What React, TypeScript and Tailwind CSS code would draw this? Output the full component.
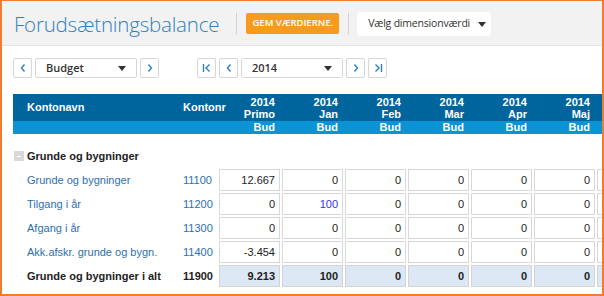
import type { ReactNode } from "react";

const months = [
  { year: "2014", label: "Primo" },
  { year: "2014", label: "Jan" },
  { year: "2014", label: "Feb" },
  { year: "2014", label: "Mar" },
  { year: "2014", label: "Apr" },
  { year: "2014", label: "Maj" },
];

const rows: Array<{ name: string; nr: string; values: string[] }> = [
  { name: "Grunde og bygninger", nr: "11100", values: ["12.667", "0", "0", "0", "0", "0"] },
  { name: "Tilgang i år", nr: "11200", values: ["0", "100", "0", "0", "0", "0"] },
  { name: "Afgang i år", nr: "11300", values: ["0", "0", "0", "0", "0", "0"] },
  { name: "Akk.afskr. grunde og bygn.", nr: "11400", values: ["-3.454", "0", "0", "0", "0", "0"] },
];

const total = { name: "Grunde og bygninger i alt", nr: "11900", values: ["9.213", "100", "0", "0", "0", "0"] };

function Chevron({ dir }: { dir: "left" | "right" }) {
  return (
    <svg width="8" height="10" viewBox="0 0 8 10" aria-hidden="true">
      <path
        d={dir === "left" ? "M5.5 1.5 L2.5 5 L5.5 8.5" : "M2.5 1.5 L5.5 5 L2.5 8.5"}
        fill="none"
        stroke="#2f7fc1"
        strokeWidth="1.4"
      />
    </svg>
  );
}

function EdgeIcon({ dir }: { dir: "first" | "last" }) {
  return (
    <svg width="12" height="10" viewBox="0 0 12 10" aria-hidden="true">
      {dir === "first" ? (
        <>
          <path d="M2.5 1 V9" stroke="#2f7fc1" strokeWidth="1.4" />
          <path d="M8.5 1.5 L5 5 L8.5 8.5" fill="none" stroke="#2f7fc1" strokeWidth="1.4" />
        </>
      ) : (
        <>
          <path d="M3.5 1.5 L7 5 L3.5 8.5" fill="none" stroke="#2f7fc1" strokeWidth="1.4" />
          <path d="M9.5 1 V9" stroke="#2f7fc1" strokeWidth="1.4" />
        </>
      )}
    </svg>
  );
}

function Caret() {
  return (
    <svg width="8" height="5" viewBox="0 0 8 5" aria-hidden="true" className="shrink-0">
      <path d="M0 0 H8 L4 5 Z" fill="#333" />
    </svg>
  );
}

function NavButton({ children }: { children: ReactNode }) {
  return (
    <button
      type="button"
      className="flex h-[20px] w-[19px] items-center justify-center rounded-[2px] border border-[#d6d6d6] bg-white"
    >
      {children}
    </button>
  );
}

function Select({ value }: { value: string }) {
  return (
    <div className="flex h-[20px] w-[102px] items-center justify-between rounded-[2px] border border-[#d6d6d6] bg-white pl-[10px] pr-[10px] text-[11px] font-semibold text-[#333]">
      <span>{value}</span>
      <Caret />
    </div>
  );
}

function Cell({ children, className }: { children?: ReactNode; className: string }) {
  return (
    <div className="w-[63px] shrink-0 pl-[2px]">
      <div className={`flex h-[22px] w-[61px] items-center justify-end border pr-[4px] ${className}`}>
        {children}
      </div>
    </div>
  );
}

function Toggle() {
  return (
    <div className="ml-[1px] mr-[3px] flex h-[10px] w-[10px] items-center justify-center bg-[#d9d9d9]">
      <div className="h-px w-[4px] bg-white" />
    </div>
  );
}

export default function App() {
  return (
    <div className="h-[296px] w-[604px] overflow-hidden border-b-2 border-l-2 border-r-2 border-t border-[#ed7d31] bg-white font-['Open_Sans',sans-serif]">
      <header className="flex h-[45px] items-start border-b border-[#e4e4e4] bg-[#f2f2f2] pl-[12px] pt-[11px]">
        <h1 className="mr-[17px] text-[20.5px] font-light leading-[24px] tracking-[-0.2px] text-[#2f7fc1]">
          Forudsætningsbalance
        </h1>
        <div className="mt-[1px] mr-[9px] h-[21px] w-px bg-[#d0d0d0]" />
        <button
          type="button"
          className="mt-[1px] h-[21px] w-[93px] rounded-[2px] bg-[#f89b1c] text-[9.5px] font-semibold text-white"
        >
          GEM VÆRDIERNE.
        </button>
        <div className="mt-[1px] ml-[9px] mr-[8px] h-[21px] w-px bg-[#d0d0d0]" />
        <button
          type="button"
          className="flex h-[24px] w-[134px] items-center gap-[8px] whitespace-nowrap rounded-[3px] bg-white pl-[11px] text-[10.5px] tracking-[-0.2px] text-[#333]"
        >
          Vælg dimensionværdi
          <Caret />
        </button>
      </header>

      <div className="flex items-center pl-[11px] pt-[12px]">
        <div className="flex items-center gap-[3px]">
          <NavButton>
            <Chevron dir="left" />
          </NavButton>
          <Select value="Budget" />
          <NavButton>
            <Chevron dir="right" />
          </NavButton>
        </div>
        <div className="ml-[38px] flex items-center gap-[3px]">
          <NavButton>
            <EdgeIcon dir="first" />
          </NavButton>
          <NavButton>
            <Chevron dir="left" />
          </NavButton>
          <Select value="2014" />
          <NavButton>
            <Chevron dir="right" />
          </NavButton>
          <NavButton>
            <EdgeIcon dir="last" />
          </NavButton>
        </div>
      </div>

      <div className="ml-[11px] mt-[16px] w-[700px] font-['Liberation_Sans',Arial,sans-serif] text-[11px]">
        <div className="flex h-[27px] items-center bg-[#00659d] font-bold text-white">
          <div className="w-[165px] shrink-0 pl-[14px]">Kontonavn</div>
          <div className="w-[39px] shrink-0 pl-[5px]">Kontonr</div>
          {months.map((m) => (
            <div key={m.label} className="w-[63px] shrink-0 pr-[5px] text-right leading-[12px]">
              <div>{m.year}</div>
              <div>{m.label}</div>
            </div>
          ))}
        </div>
        <div className="flex h-[13px] items-center bg-[#0a93d5] font-bold leading-[13px] text-white">
          <div className="w-[204px] shrink-0" />
          {months.map((m) => (
            <div key={m.label} className="w-[63px] shrink-0 pr-[5px] text-right">
              Bud
            </div>
          ))}
        </div>

        <div className="mt-[16px] flex h-[12px] items-center">
          <Toggle />
          <span className="font-bold text-[#222]">Grunde og bygninger</span>
        </div>

        <div className="mt-[7px] flex flex-col gap-[2px]">
          {rows.map((r) => (
            <div key={r.nr} className="flex h-[22px] items-center">
              <div className="w-[165px] shrink-0 pl-[14px] text-[#2c6fae]">{r.name}</div>
              <div className="w-[39px] shrink-0 pl-[5px] text-[#2c6fae]">{r.nr}</div>
              {r.values.map((v, i) => (
                <Cell
                  key={i}
                  className={`border-[#d8d8d8] bg-white ${
                    r.nr === "11200" && i === 1 ? "text-[#3333ee]" : "text-[#222]"
                  }`}
                >
                  {v}
                </Cell>
              ))}
              <Cell className="border-[#d8d8d8] bg-white" />
            </div>
          ))}
          <div className="flex h-[22px] items-center font-bold text-[#222]">
            <div className="w-[165px] shrink-0 pl-[14px]">{total.name}</div>
            <div className="w-[39px] shrink-0 pl-[5px]">{total.nr}</div>
            {total.values.map((v, i) => (
              <Cell key={i} className="border-[#d3d3d3] bg-[#dce8f6]">
                {v}
              </Cell>
            ))}
            <Cell className="border-[#d3d3d3] bg-[#dce8f6]" />
          </div>
        </div>

        <div className="mt-[6px] flex h-[12px] items-center">
          <Toggle />
        </div>
      </div>
    </div>
  );
}
